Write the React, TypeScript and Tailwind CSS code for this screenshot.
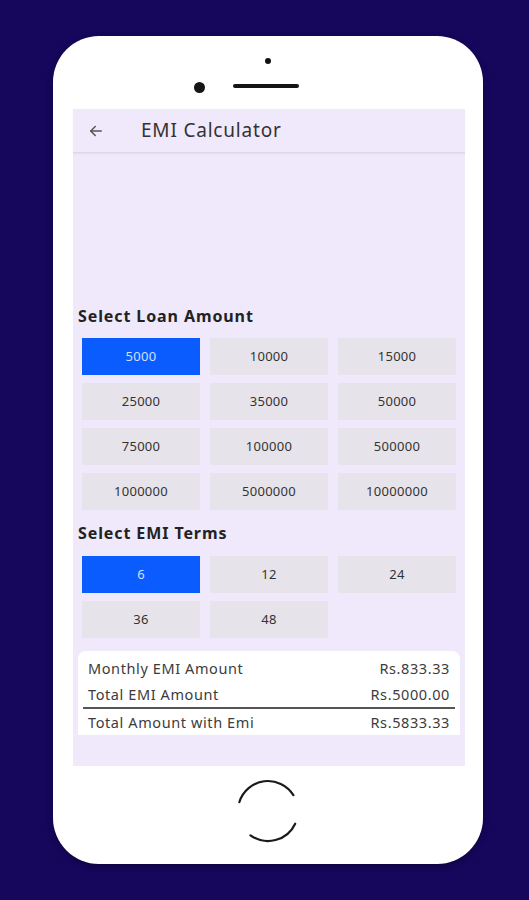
import React from "react";

const loanAmounts = [
  "5000", "10000", "15000",
  "25000", "35000", "50000",
  "75000", "100000", "500000",
  "1000000", "5000000", "10000000",
];
const terms = ["6", "12", "24", "36", "48"];

function Option({ label, active }: { label: string; active?: boolean }) {
  return (
    <div
      className={
        active
          ? "flex h-[37px] items-center justify-center bg-[#0b5cff] text-[13px] tracking-[0.3px] text-[#cfe0ff]"
          : "flex h-[37px] items-center justify-center bg-[#e6e4ea] text-[13px] tracking-[0.3px] text-[#333]"
      }
    >
      {label}
    </div>
  );
}

function ResultRow({ label, value }: { label: string; value: string }) {
  return (
    <div className="flex h-[20px] items-center justify-between px-[10px] text-[14.5px] leading-[20px] tracking-[0.6px] text-[#3c3c3c]">
      <span>{label}</span>
      <span>{value}</span>
    </div>
  );
}

export default function App() {
  return (
    <div
      className="h-[900px] w-full bg-[#16065c] pt-[36px] pl-[53px]"
      style={{ fontFamily: "'Noto Sans', sans-serif" }}
    >
      <div className="flex h-[828px] w-[430px] flex-col rounded-[46px] bg-white shadow-[0_2px_6px_rgba(0,0,0,0.35)]">
        {/* top bezel */}
        <div className="relative h-[73px]">
          <div className="absolute left-[212px] top-[22px] size-[6px] rounded-full bg-[#111]" />
          <div className="absolute left-[141px] top-[46px] size-[11px] rounded-full bg-[#151515]" />
          <div className="absolute left-[180px] top-[48px] h-[4px] w-[66px] rounded-full bg-[#151515]" />
        </div>

        {/* screen */}
        <div className="mx-[20px] flex h-[657px] w-[392px] flex-col bg-[#efe9fb]">
          <div className="flex h-[44px] items-center border-b border-[#ddd8e6] shadow-[0_1px_2px_rgba(0,0,0,0.06)]">
            <svg className="ml-[14px] size-[18px] text-[#555]" viewBox="0 0 24 24" fill="none" stroke="currentColor" strokeWidth="2" strokeLinecap="round" strokeLinejoin="round">
              <path d="M19 12H5" />
              <path d="M11 6l-6 6 6 6" />
            </svg>
            <span className="ml-[36px] text-[19px] tracking-[0.8px] text-[#333]">EMI Calculator</span>
          </div>

          <div className="h-[153px]" />

          <div className="pl-[5px] text-[16px] font-bold leading-[20px] tracking-[0.9px] text-[#222]">Select Loan Amount</div>
          <div className="mt-[12px] grid grid-cols-3 gap-x-[10px] gap-y-[8px] px-[9px]">
            {loanAmounts.map((a, i) => (
              <Option key={a} label={a} active={i === 0} />
            ))}
          </div>

          <div className="mt-[13px] pl-[5px] text-[16px] font-bold leading-[20px] tracking-[0.9px] text-[#222]">Select EMI Terms</div>
          <div className="mt-[13px] grid grid-cols-3 gap-x-[10px] gap-y-[8px] px-[9px]">
            {terms.map((t, i) => (
              <Option key={t} label={t} active={i === 0} />
            ))}
          </div>

          <div className="mx-[5px] mt-[13px] flex h-[84px] flex-col overflow-hidden rounded-t-[8px] bg-white pt-[7px]">
            <ResultRow label="Monthly EMI Amount" value="Rs.833.33" />
            <div className="mt-[6px]">
              <ResultRow label="Total EMI Amount" value="Rs.5000.00" />
            </div>
            <div className="mx-[5px] mt-[3px] h-[2px] shrink-0 bg-[#555]" />
            <div className="mt-[3px]">
              <ResultRow label="Total Amount with Emi" value="Rs.5833.33" />
            </div>
          </div>
        </div>

        {/* bottom bezel with home button */}
        <div className="flex flex-1 items-center justify-center pb-[8px]">
          <svg width="64" height="66" viewBox="0 0 64 66" fill="none">
            <path d="M3.3 24.2 A30 30 0 0 1 57.4 17.1" stroke="#1a1a1a" strokeWidth="2.2" strokeLinecap="round" />
            <path d="M59.2 45.7 A30 30 0 0 1 14.4 57.3" stroke="#1a1a1a" strokeWidth="2.2" strokeLinecap="round" />
          </svg>
        </div>
      </div>
    </div>
  );
}
